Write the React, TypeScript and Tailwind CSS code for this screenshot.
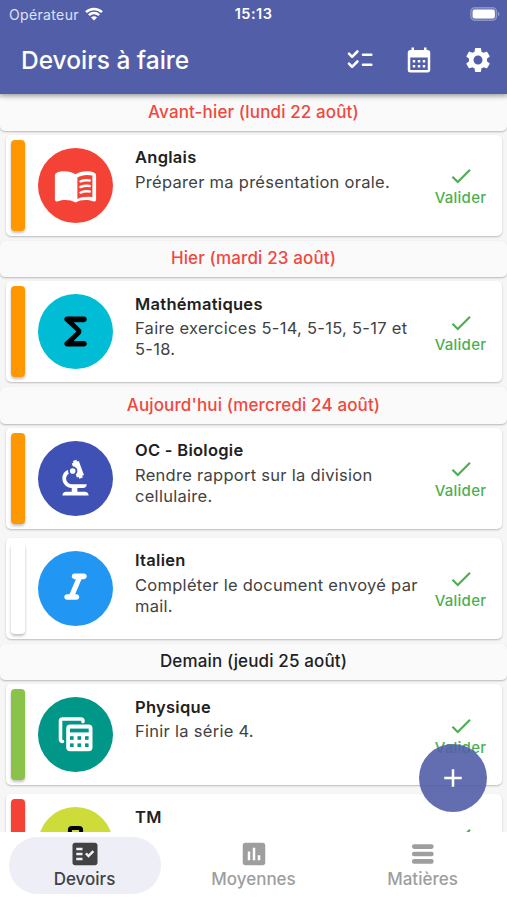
import type { ReactNode } from "react";
import {
  MdAdd,
  MdBiotech,
  MdCalendarMonth,
  MdCheck,
  MdFactCheck,
  MdInsertChart,
  MdSettings,
} from "react-icons/md";

function StatusBar() {
  return (
    <div className="relative flex h-7 items-center justify-between pl-[9px] pr-[7px]">
      <div className="flex items-center gap-1.5 text-[14px] text-[#dfe2f5]">
        <span className="tracking-[0.35px]">Opérateur</span>
        <svg width="18" height="14" viewBox="0 0 18 14" fill="none" stroke="white" strokeWidth="2.5">
          <path d="M1 5.2A11.3 11.3 0 0 1 17 5.2" />
          <path d="M3.9 8.2A7.2 7.2 0 0 1 14.1 8.2" />
          <path d="M6 10.4A4.2 4.2 0 0 1 12 10.4L9 13.6Z" fill="white" stroke="none" />
        </svg>
      </div>
      <span className="absolute left-1/2 -translate-x-1/2 text-[14.5px] font-semibold tracking-[0.5px]">15:13</span>
      <svg width="30" height="14" viewBox="0 0 30 14">
        <rect x="0.7" y="0.7" width="26" height="12.6" rx="4" fill="white" fillOpacity="0.15" stroke="white" strokeOpacity="0.3" strokeWidth="1.2" />
        <rect x="2.6" y="2.5" width="22.3" height="9" rx="2.3" fill="white" />
        <path d="M28.2 4.8c1.7.8 1.7 3.6 0 4.4z" fill="white" fillOpacity="0.45" />
      </svg>
    </div>
  );
}

function Header() {
  return (
    <header className="relative z-10 h-[94px] shrink-0 bg-[#525ea8] text-white shadow-[0_2px_5px_rgba(0,0,0,0.38)]">
      <StatusBar />
      <div className="flex h-[64px] items-center pl-[21px] pr-[14px]">
        <h1 className="flex-1 text-[24.5px] font-medium">Devoirs à faire</h1>
        <div className="flex items-center gap-[29px]">
          <svg width="30" height="30" viewBox="0 0 30 30" fill="none" stroke="white" strokeWidth="2.6" strokeLinecap="round" strokeLinejoin="round">
            <path d="M4 8.7l3.1 3.1L12.4 6.5M4 18.7l3.1 3.1 5.3-5.3M18 9.8h8.3M18 19.8h8.3" />
          </svg>
          <MdCalendarMonth size={30} />
          <MdSettings size={30} />
        </div>
      </div>
    </header>
  );
}

function BookIcon() {
  return (
    <svg width="45" height="45" viewBox="0 0 45 45">
      <path
        d="M22.5 11.3C17.5 7.8 8.5 7.6 3.8 9.8 2.5 10.4 1.9 11.3 1.9 12.6V36.2c0 1.8 1.4 2.7 3.1 2.1 5.2-2 12.5-1.8 17.5 1.2 5-3 12.3-3.2 17.5-1.2 1.7.6 3.1-.3 3.1-2.1V12.6c0-1.3-.6-2.2-1.9-2.8C36.5 7.6 27.5 7.8 22.5 11.3z"
        fill="white"
      />
      <path d="M24.4 14.6c4-2.6 9.3-3.3 15-2.1V34.2c-5.5-.9-11-.3-15 1.8z" fill="#f44336" />
      <path d="M27.5 18.4c3-1.2 6-1.5 9.2-1M27.5 24c3-1.2 6-1.5 9.2-1M27.5 29.6c3-1.2 6-1.5 9.2-1" fill="none" stroke="white" strokeWidth="2.5" strokeLinecap="round" />
    </svg>
  );
}

function SumIcon() {
  return (
    <svg width="45" height="45" viewBox="0 0 24 24" fill="currentColor">
      <path d="M16.5 4H7.56C6.7 4 6 4.7 6 5.56c0 .28.12.55.32.74L12.5 12l-6.18 5.7c-.2.19-.32.46-.32.74C6 19.3 6.7 20 7.56 20h8.94c.83 0 1.5-.67 1.5-1.5s-.67-1.5-1.5-1.5H11l3.59-3.59c.78-.78.78-2.05 0-2.83L11 7h5.5c.83 0 1.5-.67 1.5-1.5S17.33 4 16.5 4z" />
    </svg>
  );
}

function ItalicIcon() {
  return (
    <svg width="45" height="45" viewBox="0 0 24 24" fill="currentColor">
      <path d="M10 5.5c0 .83.67 1.5 1.5 1.5h.71l-3.42 8H7.5c-.83 0-1.5.67-1.5 1.5S6.67 18 7.5 18h5c.83 0 1.5-.67 1.5-1.5s-.67-1.5-1.5-1.5h-.71l3.42-8h1.29c.83 0 1.5-.67 1.5-1.5S17.33 4 16.5 4h-5c-.83 0-1.5.67-1.5 1.5z" />
    </svg>
  );
}

function CalculatorIcon() {
  return (
    <svg width="45" height="45" viewBox="0 0 45 45">
      <path d="M9.5 29.5c-1 0-2-.9-2-2V9c0-1.2.8-2 2-2H28c1.2 0 2 .8 2 2v.6" fill="none" stroke="white" strokeWidth="3.6" strokeLinecap="round" />
      <rect x="13.2" y="12.6" width="26.3" height="26.6" rx="4" fill="white" />
      <g fill="#009688">
        <rect x="17" y="16.6" width="18.7" height="3.8" />
        <rect x="17" y="24.2" width="3.6" height="3.6" />
        <rect x="24.5" y="24.2" width="3.6" height="3.6" />
        <rect x="32" y="24.2" width="3.6" height="3.6" />
        <rect x="17" y="31.4" width="3.6" height="3.6" />
        <rect x="24.5" y="31.4" width="3.6" height="3.6" />
        <rect x="32" y="31.4" width="3.6" height="3.6" />
      </g>
    </svg>
  );
}

function BriefcaseIcon() {
  return (
    <svg width="45" height="45" viewBox="0 0 45 45">
      <path d="M16.9 13V8c0-1.2.8-2 2-2h7.2c1.2 0 2 .8 2 2v5" fill="none" stroke="black" strokeWidth="4" />
      <rect x="3.75" y="11.25" width="37.5" height="28" rx="4" fill="black" />
    </svg>
  );
}

type Homework = {
  subject: string;
  lines: string[];
  bar: string;
  circle: string;
  icon: ReactNode;
};

type Day = { label: string; color: string; items: Homework[] };

const days: Day[] = [
  {
    label: "Avant-hier (lundi 22 août)",
    color: "text-[#f0483e]",
    items: [
      {
        subject: "Anglais",
        lines: ["Préparer ma présentation orale."],
        bar: "bg-[#ff9800]",
        circle: "bg-[#f44336] text-white",
        icon: <BookIcon />,
      },
    ],
  },
  {
    label: "Hier (mardi 23 août)",
    color: "text-[#f0483e]",
    items: [
      {
        subject: "Mathématiques",
        lines: ["Faire exercices 5-14, 5-15, 5-17 et", "5-18."],
        bar: "bg-[#ff9800]",
        circle: "bg-[#00bcd4] text-black",
        icon: <SumIcon />,
      },
    ],
  },
  {
    label: "Aujourd'hui (mercredi 24 août)",
    color: "text-[#f0483e]",
    items: [
      {
        subject: "OC - Biologie",
        lines: ["Rendre rapport sur la division", "cellulaire."],
        bar: "bg-[#ff9800]",
        circle: "bg-[#3f51b5] text-white",
        icon: <MdBiotech size={45} />,
      },
      {
        subject: "Italien",
        lines: ["Compléter le document envoyé par", "mail."],
        bar: "bg-white",
        circle: "bg-[#2196f3] text-white",
        icon: <ItalicIcon />,
      },
    ],
  },
  {
    label: "Demain (jeudi 25 août)",
    color: "text-[#212121]",
    items: [
      {
        subject: "Physique",
        lines: ["Finir la série 4."],
        bar: "bg-[#8bc34a]",
        circle: "bg-[#009688] text-white",
        icon: <CalculatorIcon />,
      },
      {
        subject: "TM",
        lines: [],
        bar: "bg-[#f44336]",
        circle: "bg-[#cddc39] text-black",
        icon: <BriefcaseIcon />,
      },
    ],
  },
];

function HomeworkCard({ item }: { item: Homework }) {
  return (
    <div className="mx-[5.5px] mb-[5px] mt-1 flex h-[101px] shrink-0 rounded-[5px] bg-white pl-[5px] pt-[5px] shadow-[0_1px_2px_rgba(0,0,0,0.24)]">
      <div className={`h-[91px] w-[14px] shrink-0 rounded-[4px] shadow-[0_2px_3px_rgba(0,0,0,0.25)] ${item.bar}`} />
      <div className={`ml-[13.5px] mt-2 flex size-[75px] shrink-0 items-center justify-center rounded-full ${item.circle}`}>
        {item.icon}
      </div>
      <div className="ml-[22px] mt-[7.5px] flex-1 whitespace-nowrap text-[16.5px] leading-[21px] tracking-[0.28px] text-[#424242]">
        <div className="mb-[3.5px] font-semibold text-[#212121]">{item.subject}</div>
        {item.lines.map((line) => (
          <div key={line}>{line}</div>
        ))}
      </div>
      <button className="mr-[14px] mt-[23.5px] flex w-[54px] shrink-0 flex-col items-center text-[15px] font-medium leading-[18px] tracking-[0.25px] text-[#4caf50]">
        <MdCheck size={26} />
        Valider
      </button>
    </div>
  );
}

const tabs = [
  { label: "Devoirs", active: true, icon: <MdFactCheck size={30} /> },
  { label: "Moyennes", active: false, icon: <MdInsertChart size={30} /> },
  {
    label: "Matières",
    active: false,
    icon: (
      <svg width="30" height="30" viewBox="0 0 30 30" stroke="currentColor" strokeWidth="4.6" strokeLinecap="round">
        <path d="M6.2 7.6h17.2M6.2 15h17.2M6.2 22.4h17.2" />
      </svg>
    ),
  },
];

function BottomNav() {
  return (
    <nav className="relative z-10 flex h-[68px] shrink-0 bg-white pt-[5px]">
      {tabs.map((tab) => (
        <div key={tab.label} className="flex flex-1 justify-center">
          <button
            className={`flex h-[57px] w-[152px] flex-col items-center rounded-full pt-0.5 text-[17px] font-medium leading-5 ${
              tab.active ? "bg-[#edeef6] text-[#424242]" : "text-[#9e9e9e]"
            }`}
          >
            {tab.icon}
            {tab.label}
          </button>
        </div>
      ))}
    </nav>
  );
}

export default function App() {
  return (
    <div className="flex h-[900px] w-[507px] flex-col overflow-hidden bg-[#f6f6f6] font-['Inter',sans-serif]">
      <Header />
      <main className="relative min-h-0 flex-1 overflow-hidden">
        {days.map((day) => (
          <section key={day.label} className="flex flex-col">
            <h2
              className={`flex h-[36.5px] items-center justify-center rounded-[5px] bg-[#fafafa] text-[17px] font-medium tracking-[0.13px] shadow-[0_1px_2px_rgba(0,0,0,0.26)] ${day.color}`}
            >
              {day.label}
            </h2>
            {day.items.map((item) => (
              <HomeworkCard key={item.subject} item={item} />
            ))}
          </section>
        ))}
        <button className="absolute bottom-5 right-5 flex size-[68px] items-center justify-center rounded-full bg-[#525ea8]/90 text-white">
          <MdAdd size={30} />
        </button>
      </main>
      <BottomNav />
    </div>
  );
}
